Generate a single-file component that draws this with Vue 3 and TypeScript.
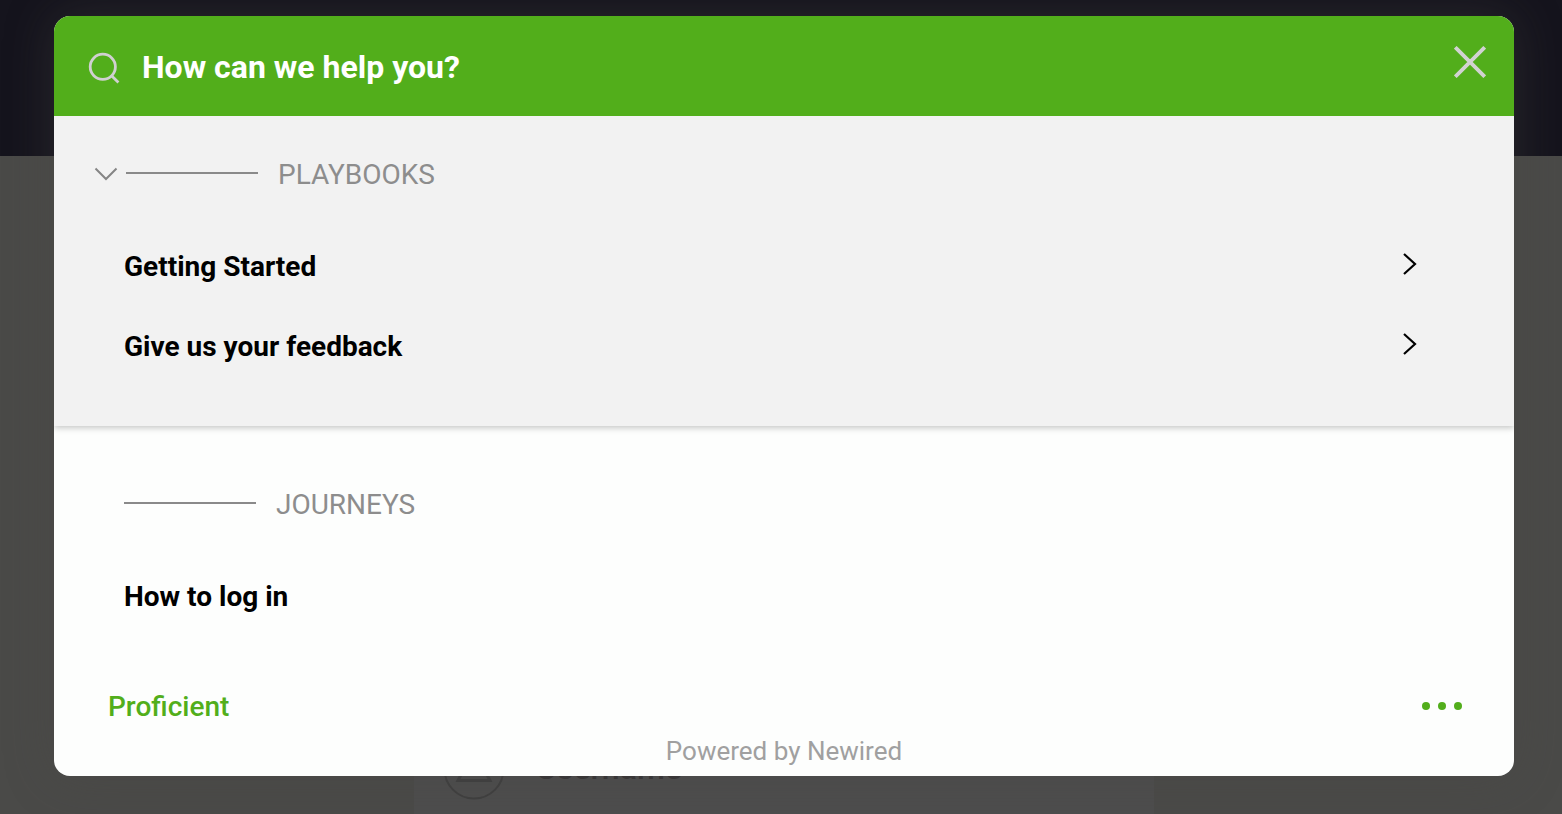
<script setup lang="ts">
import { ref } from 'vue'

const query = ref('')
const open = ref(true)
const playbooks: string[] = ['Getting Started', 'Give us your feedback']
const journeys: string[] = ['How to log in']
</script>

<template>
  <div class="page">
    <div class="backdrop" aria-hidden="true">
      <div class="banner"></div>
      <div class="login">
        <svg class="avatar" viewBox="0 0 62 62">
          <circle cx="31" cy="31" r="29.5" />
          <path class="bust" d="M15 42.5 L20 33 Q31 27 42 33 L47 42.5 Z" />
        </svg>
        <span class="field">Username</span>
      </div>
    </div>

    <main class="panel">
      <header class="head">
        <svg class="search" viewBox="0 0 32 32" aria-hidden="true">
          <circle cx="14.8" cy="14.8" r="12.6" />
          <path d="M23.6 23.8 L30.4 30.4" />
        </svg>
        <input v-model="query" class="query" type="text" aria-label="Search help" placeholder="How can we help you?" />
        <button class="close" type="button" aria-label="Close">
          <svg viewBox="0 0 32 32"><path d="M1.3 1.3 L30.7 30.7 M30.7 1.3 L1.3 30.7" /></svg>
        </button>
      </header>

      <section class="playbooks">
        <h2 class="title">
          <button class="toggle" type="button" aria-label="Toggle playbooks" :aria-expanded="open" @click="open = !open">
            <svg viewBox="0 0 24 16"><path d="M1.5 2.5 L12 13 L22.5 2.5" /></svg>
          </button>
          <span class="rule"></span>
          <span>PLAYBOOKS</span>
        </h2>
        <template v-if="open">
          <button v-for="name in playbooks" :key="name" class="item" type="button">
            <span>{{ name }}</span>
            <svg class="arrow" viewBox="0 0 16 28" aria-hidden="true"><path d="M2 2 L13 12 L2 22" /></svg>
          </button>
        </template>
      </section>

      <section class="journeys">
        <h2 class="title">
          <span class="rule"></span>
          <span>JOURNEYS</span>
        </h2>
        <button v-for="name in journeys" :key="name" class="item" type="button">{{ name }}</button>
      </section>

      <footer class="foot">
        <div class="status">
          <span>Proficient</span>
          <button class="more" type="button" aria-label="More options">
            <svg viewBox="0 0 40 8"><circle cx="4" cy="4" r="4" /><circle cx="20" cy="4" r="4" /><circle cx="36" cy="4" r="4" /></svg>
          </button>
        </div>
        <p class="powered">Powered by Newired</p>
      </footer>
    </main>
  </div>
</template>

<style>
body {
  margin: 0;
  background: #494948;
}
</style>

<style scoped>
.page {
  position: relative;
  box-sizing: border-box;
  min-height: 100vh;
  padding: 16px 48px 38px 54px;
  overflow: hidden;
  font-family: Roboto, "Liberation Sans", sans-serif;
}
.backdrop {
  position: absolute;
  inset: 0;
  background: #4a4a48;
}
.banner {
  height: 156px;
  background: #15141d;
}
.login {
  position: absolute;
  top: 156px;
  bottom: 0;
  left: 50%;
  width: 740px;
  margin-left: -367px;
  background: #4d4d4d;
}
.avatar {
  position: absolute;
  top: 582px;
  left: 29px;
  width: 62px;
  height: 62px;
  fill: none;
  stroke: #3f3f3f;
  stroke-width: 2;
}
.bust {
  stroke-width: 3;
}
.field {
  position: absolute;
  top: 592px;
  left: 122px;
  font-size: 32px;
  line-height: 40px;
  font-weight: 500;
  color: #363435;
}
.panel {
  position: relative;
  border-radius: 16px;
  background: #fdfefd;
  box-shadow: 0 0 48px rgba(72, 70, 68, 0.4);
}
.head {
  display: flex;
  align-items: center;
  height: 100px;
  padding: 0 28px 0 34px;
  border-radius: 16px 16px 0 0;
  background: #52ae1b;
}
.search {
  flex: none;
  width: 32px;
  height: 32px;
  margin-top: 4px;
  fill: none;
  stroke: #d0d0d0;
  stroke-width: 2.8;
}
button {
  padding: 0;
  border: 0;
  background: none;
  font: inherit;
  color: inherit;
  cursor: pointer;
}
button svg {
  display: block;
  fill: none;
}
.query {
  flex: 1;
  min-width: 0;
  height: 48px;
  margin-top: 2px;
  padding: 0 0 0 22px;
  border: 0;
  outline: 0;
  background: none;
  font: 700 32px/48px Roboto, "Liberation Sans", sans-serif;
  color: #fff;
}
.query::placeholder {
  color: #fff;
  opacity: 1;
}
.close {
  margin-bottom: 8px;
}
.close svg {
  width: 32px;
  height: 32px;
  stroke: #d2d2d2;
  stroke-width: 3.8;
}
.playbooks {
  position: relative;
  padding: 30px 96px 40px 70px;
  background: #f2f2f2;
  box-shadow: 0 2px 6px rgba(0, 0, 0, 0.22);
  clip-path: inset(0 0 -10px 0);
}
.journeys {
  padding: 50px 96px 40px 70px;
}
.title {
  display: flex;
  align-items: center;
  margin: 0 0 22px;
  font-size: 28px;
  line-height: 58px;
  font-weight: 400;
  color: #8d8d8d;
}
.playbooks .title {
  margin-left: -30px;
}
.toggle {
  margin: 0 8px 2px 0;
}
.toggle svg {
  width: 24px;
  height: 16px;
  stroke: #858585;
  stroke-width: 2;
}
.rule {
  width: 132px;
  height: 2px;
  margin: 0 20px 4px 0;
  background: #8a8a8a;
}
.item {
  display: flex;
  align-items: center;
  justify-content: space-between;
  width: 100%;
  height: 80px;
  font-size: 28px;
  font-weight: 700;
  text-align: left;
  color: #000;
}
.arrow {
  width: 16px;
  height: 28px;
  stroke: #000;
  stroke-width: 2.2;
}
.foot {
  padding-bottom: 10px;
}
.status {
  display: flex;
  align-items: center;
  justify-content: space-between;
  height: 60px;
  padding: 0 52px 0 54px;
  font-size: 28px;
  font-weight: 500;
  color: #52ae1b;
}
.more svg {
  width: 40px;
  height: 8px;
  fill: #52ae1b;
}
.powered {
  margin: 0;
  font-size: 26px;
  line-height: 30px;
  text-align: center;
  color: #a0a0a0;
}
</style>
